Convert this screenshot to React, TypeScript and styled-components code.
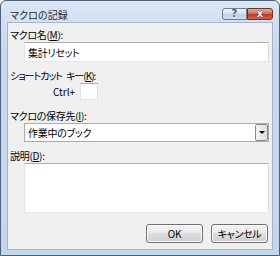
import styled, { createGlobalStyle } from "styled-components";

const GlobalStyle = createGlobalStyle`
  html, body {
    margin: 0;
    padding: 0;
    background: #ffffff;
  }
  body {
    font-family: "Noto Sans CJK JP", "Noto Sans", sans-serif;
    font-feature-settings: "palt";
  }
`;

const Window = styled.div`
  box-sizing: border-box;
  width: 280px;
  height: 256px;
  border: 1px solid #4e6079;
  border-radius: 6px 6px 0 0;
  background: linear-gradient(#dce7f4, #c8daee 40px, #c4d7ee);
  padding: 0 6px 5px 6px;
  display: flex;
  flex-direction: column;
`;

const TitleBar = styled.div`
  height: 21px;
  display: flex;
  align-items: flex-start;
`;

const Title = styled.div`
  flex: 1;
  padding: 7px 0 0 3px;
  font-size: 10px;
  letter-spacing: 0.1px;
  line-height: 13px;
  color: #1e2a3a;
`;

const CaptionButton = styled.div<{ $close?: boolean }>`
  box-sizing: border-box;
  margin-top: 7px;
  width: ${(p) => (p.$close ? "26px" : "25px")};
  height: 12px;
  border: 1px solid ${(p) => (p.$close ? "#6e3027" : "#6c7d94")};
  border-radius: ${(p) => (p.$close ? "0 3px 3px 0" : "3px 0 0 3px")};
  background: ${(p) =>
    p.$close
      ? "linear-gradient(#e8a89c, #d0705f 45%, #c03a26 55%, #d5664f)"
      : "linear-gradient(#eef3f9, #d6e1ee 45%, #c3d1e3 55%, #d2deec)"};
  display: flex;
  align-items: center;
  justify-content: center;
  font-family: "DejaVu Sans", sans-serif;
  font-weight: bold;
  font-size: 10px;
  line-height: 10px;
  color: ${(p) => (p.$close ? "#ffffff" : "#4d5b6e")};
  text-shadow: ${(p) =>
    p.$close ? "0 0 1px #5a1a10, 0 0 1px #5a1a10" : "0 1px 0 #ffffff"};
`;

const Client = styled.div`
  flex: 1;
  background: #f0f0f0;
  border: 1px solid #a3b6cf;
  padding: 5px 3px 0 2px;
  display: flex;
  flex-direction: column;
  font-size: 10px;
  letter-spacing: -0.3px;
  color: #000000;
`;

const Label = styled.div<{ $gap?: number; $tight?: boolean }>`
  height: 14px;
  line-height: 14px;
  margin-top: ${(p) => p.$gap ?? 0}px;
  white-space: pre;
  letter-spacing: ${(p) => (p.$tight ? "-1px" : "-0.3px")};
`;

const Field = styled.div<{ $height: number }>`
  box-sizing: border-box;
  margin-left: 14px;
  height: ${(p) => p.$height}px;
  background: #ffffff;
  border: 1px solid;
  border-color: #abadb3 #dbdfe6 #e3e9ef #e2e3ea;
  display: flex;
  align-items: center;
  padding-left: 3px;
`;

const ShortcutRow = styled.div`
  height: 17px;
  margin-left: 43px;
  display: flex;
  align-items: center;
`;

const CtrlText = styled.span`
  width: 27px;
  letter-spacing: 0;
`;

const KeyBox = styled.div`
  box-sizing: border-box;
  width: 18px;
  height: 17px;
  background: #ffffff;
  border: 1px solid;
  border-color: #abadb3 #dbdfe6 #e3e9ef #e2e3ea;
`;

const Select = styled.div`
  box-sizing: border-box;
  margin-left: 14px;
  height: 19px;
  background: #ffffff;
  border: 1px solid #acacac;
  display: flex;
  align-items: stretch;
`;

const SelectValue = styled.div`
  flex: 1;
  display: flex;
  align-items: center;
  padding-left: 3px;
`;

const SelectArrow = styled.div`
  box-sizing: border-box;
  width: 13px;
  border: 1px solid #8b8b8b;
  border-radius: 2px;
  background: linear-gradient(90deg, #f5f5f5, #dedede);
  display: flex;
  align-items: center;
  justify-content: center;
`;

const ButtonRow = styled.div`
  margin-top: 11px;
  margin-right: 1px;
  display: flex;
  justify-content: flex-end;
  gap: 8px;
`;

const Button = styled.div`
  box-sizing: border-box;
  width: 57px;
  height: 19px;
  border: 1px solid #707070;
  border-radius: 3px;
  background: linear-gradient(#f2f2f2, #ebebeb 45%, #dddddd 50%, #cfcfcf);
  box-shadow: inset 0 0 0 1px #fcfcfc;
  display: flex;
  align-items: center;
  justify-content: center;
`;

function App() {
  return (
    <>
      <GlobalStyle />
      <Window>
        <TitleBar>
          <Title>マクロの記録</Title>
          <CaptionButton>?</CaptionButton>
          <CaptionButton $close>x</CaptionButton>
        </TitleBar>
        <Client>
          <Label>
            マクロ名(<u>M</u>):
          </Label>
          <Field $height={20}>集計リセット</Field>
          <Label $gap={7} $tight>
            ショートカット{"\u2002"}キー(<u>K</u>):
          </Label>
          <ShortcutRow>
            <CtrlText>Ctrl+</CtrlText>
            <KeyBox />
          </ShortcutRow>
          <Label $gap={9}>
            マクロの保存先(<u>I</u>):
          </Label>
          <Select>
            <SelectValue>作業中のブック</SelectValue>
            <SelectArrow>
              <svg width="6" height="3" viewBox="0 0 6 3">
                <path d="M0 0 H6 L3 3 Z" fill="#000" />
              </svg>
            </SelectArrow>
          </Select>
          <Label $gap={7}>
            説明(<u>D</u>):
          </Label>
          <Field $height={50} />
          <ButtonRow>
            <Button>OK</Button>
            <Button>キャンセル</Button>
          </ButtonRow>
        </Client>
      </Window>
    </>
  );
}

export default App;
